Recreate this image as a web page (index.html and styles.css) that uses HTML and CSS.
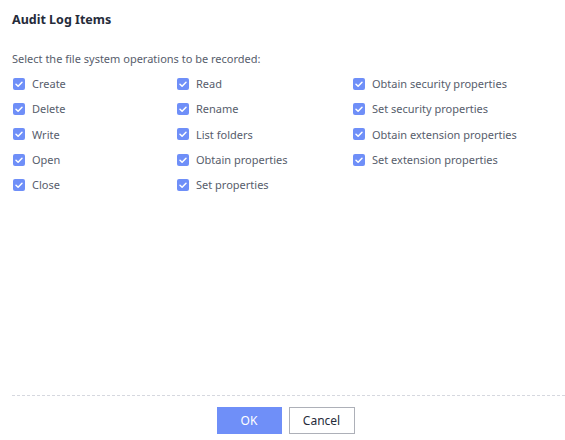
FILE: index.html
```html
<!DOCTYPE html>
<html>
<head>
<meta charset="utf-8">
<link rel="stylesheet" href="styles.css">
</head>
<body>
<div class="dialog">
  <div class="title">Audit Log Items</div>
  <div class="body">
    <div class="hint">Select the file system operations to be recorded:</div>
    <div class="grid">
      <div class="col">
        <label class="cb"><span class="box"><svg viewBox="0 0 12 12"><path d="M3 6.2 L5.1 8.2 L9 4.2" /></svg></span>Create</label>
        <label class="cb"><span class="box"><svg viewBox="0 0 12 12"><path d="M3 6.2 L5.1 8.2 L9 4.2" /></svg></span>Delete</label>
        <label class="cb"><span class="box"><svg viewBox="0 0 12 12"><path d="M3 6.2 L5.1 8.2 L9 4.2" /></svg></span>Write</label>
        <label class="cb"><span class="box"><svg viewBox="0 0 12 12"><path d="M3 6.2 L5.1 8.2 L9 4.2" /></svg></span>Open</label>
        <label class="cb"><span class="box"><svg viewBox="0 0 12 12"><path d="M3 6.2 L5.1 8.2 L9 4.2" /></svg></span>Close</label>
      </div>
      <div class="col">
        <label class="cb"><span class="box"><svg viewBox="0 0 12 12"><path d="M3 6.2 L5.1 8.2 L9 4.2" /></svg></span>Read</label>
        <label class="cb"><span class="box"><svg viewBox="0 0 12 12"><path d="M3 6.2 L5.1 8.2 L9 4.2" /></svg></span>Rename</label>
        <label class="cb"><span class="box"><svg viewBox="0 0 12 12"><path d="M3 6.2 L5.1 8.2 L9 4.2" /></svg></span>List folders</label>
        <label class="cb"><span class="box"><svg viewBox="0 0 12 12"><path d="M3 6.2 L5.1 8.2 L9 4.2" /></svg></span>Obtain properties</label>
        <label class="cb"><span class="box"><svg viewBox="0 0 12 12"><path d="M3 6.2 L5.1 8.2 L9 4.2" /></svg></span>Set properties</label>
      </div>
      <div class="col">
        <label class="cb"><span class="box"><svg viewBox="0 0 12 12"><path d="M3 6.2 L5.1 8.2 L9 4.2" /></svg></span>Obtain security properties</label>
        <label class="cb"><span class="box"><svg viewBox="0 0 12 12"><path d="M3 6.2 L5.1 8.2 L9 4.2" /></svg></span>Set security properties</label>
        <label class="cb"><span class="box"><svg viewBox="0 0 12 12"><path d="M3 6.2 L5.1 8.2 L9 4.2" /></svg></span>Obtain extension properties</label>
        <label class="cb"><span class="box"><svg viewBox="0 0 12 12"><path d="M3 6.2 L5.1 8.2 L9 4.2" /></svg></span>Set extension properties</label>
      </div>
    </div>
  </div>
  <div class="footer">
    <button class="btn primary">OK</button>
    <button class="btn">Cancel</button>
  </div>
</div>
</body>
</html>
```
FILE: styles.css
```css
html, body {
  margin: 0;
  padding: 0;
  background: #fff;
}
body {
  font-family: "Noto Sans", "Open Sans", sans-serif;
  font-size: 11px;
  color: #575d6c;
}
.dialog {
  width: 565px;
  height: 440px;
  display: flex;
  flex-direction: column;
  box-sizing: border-box;
}
.title {
  font-size: 12.5px;
  font-weight: bold;
  color: #252b3a;
  padding: 10px 0 0 12px;
  height: 20px;
  line-height: 20px;
}
.body {
  flex: 1;
  padding: 19px 0 0 12px;
}
.hint {
  line-height: 20px;
  height: 20px;
}
.grid {
  display: grid;
  grid-template-columns: 164px 176px 1fr;
  margin-top: 2px;
  padding-left: 1px;
}
.col {
  display: flex;
  flex-direction: column;
}
.cb {
  display: flex;
  align-items: center;
  height: 25.3px;
  gap: 7px;
  white-space: nowrap;
}
.box {
  width: 12px;
  height: 12px;
  border-radius: 2px;
  background: #6f8ff8;
  display: flex;
}
.box svg {
  width: 12px;
  height: 12px;
  fill: none;
  stroke: #fff;
  stroke-width: 1.5;
  stroke-linecap: round;
  stroke-linejoin: round;
}
.footer {
  margin: 0 0 0 12px;
  border-top: 1px dashed #d6d8df;
  display: flex;
  justify-content: center;
  align-items: flex-start;
  gap: 7px;
  padding: 11px 6px 0 0;
  box-sizing: border-box;
  height: 45px;
}
.btn {
  font-family: "Noto Sans", "Open Sans", sans-serif;
  font-size: 12px;
  height: 27px;
  width: 66px;
  border: 1px solid #adb0b8;
  background: #fff;
  color: #252b3a;
  padding: 0;
  margin: 0;
}
.btn.primary {
  background: #6f8ff8;
  border-color: #6f8ff8;
  color: #fff;
  width: 65px;
}
```
